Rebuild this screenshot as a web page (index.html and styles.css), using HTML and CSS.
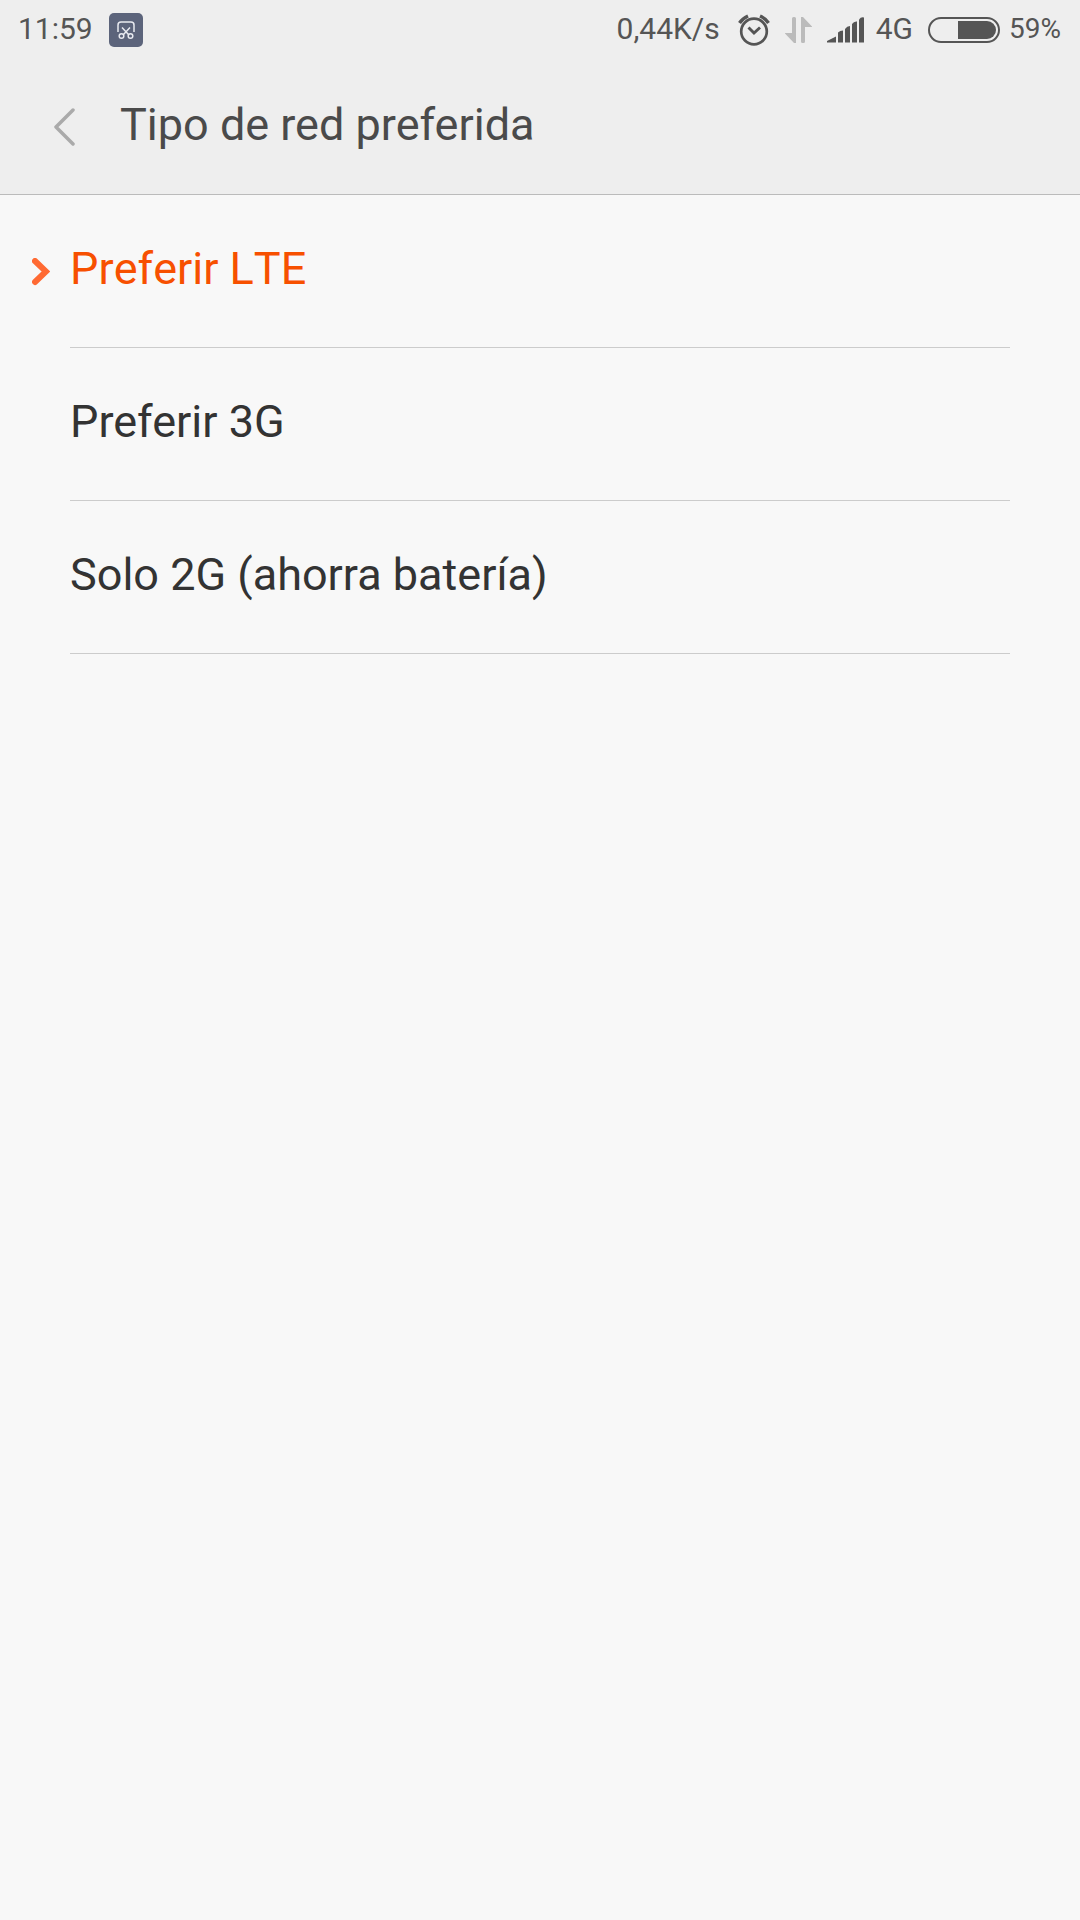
FILE: index.html
```
<!DOCTYPE html>
<html lang="es">
<head>
  <meta charset="UTF-8" />
  <meta name="viewport" content="width=device-width, initial-scale=1.0" />
  <title>Tipo de red preferida</title>
  <link rel="stylesheet" href="styles.css">
</head>
<body>

  <header>
    <div class="status-bar">
      <span>11:59</span>
      <svg class="app-icon" width="34" height="34" viewBox="0 0 34 34" aria-hidden="true">
        <rect width="34" height="34" rx="5" fill="#5c647b" />
        <g fill="none" stroke="#e8eaf0" stroke-width="1.5">
          <path d="M9 19v-7q0-3 3-3h10q3 0 3 3v7" />
          <path d="M13 14.500l6.500 7M21 14.500l-6.500 7" />
          <circle cx="12.500" cy="23" r="2.300" />
          <circle cx="21.500" cy="23" r="2.300" />
        </g>
      </svg>

      <span class="speed">0,44K/s</span>
      <svg class="alarm" width="32" height="32" viewBox="0 0 32 32" fill="none" stroke="#555" aria-hidden="true">
        <circle cx="16" cy="17.500" r="12.800" stroke-width="2.700" />
        <path d="M10.500 13.500l5.500 5.500 6-5.500" stroke-width="2.900" />
        <path d="M1.500 9Q4.500 4.500 10 2M30.500 9Q27.500 4.500 22 2" stroke-width="3.400" />
      </svg>
      <svg class="data" width="28" height="26" viewBox="0 0 28 26" fill="#bbb" aria-hidden="true">
        <path d="M7 1.500Q7 0 8.500 0h1Q11 0 11 1.500V26H9L0 16.500V16h7z" />
        <path d="M20 24.500Q20 26 18.500 26h-1Q16 26 16 24.500V0h2l9 9.500v.500h-7z" />
      </svg>
      <svg class="signal" width="38" height="26" viewBox="0 0 38 26" fill="#555" aria-hidden="true">
        <path d="M0 25.500v-1.500l9-4.500v6z" />
        <path d="M11 15.500q2-2 5-2v12h-5z" />
        <path d="M18 12q2-3 5-3v16.500h-5z" />
        <path d="M25 7q2-3 5-2.500v21h-5z" />
        <path d="M32 2.500q2-3 5-2v25h-5z" />
      </svg>
      <span class="network">4G</span>
      <svg class="battery" width="72" height="26" viewBox="0 0 72 26" aria-hidden="true">
        <rect x="1" y="1" width="70" height="24" rx="12" fill="none" stroke="#555" stroke-width="2" />
        <path d="M30 4h29a9 9 0 0 1 0 18H30z" fill="#555" />
      </svg>
      <span class="percent">59%</span>
    </div>

    <div class="title-bar">
      <button class="back-btn" type="button" aria-label="Atrás" onclick="history.back()">
        <svg width="22" height="40" viewBox="0 0 22 40" fill="none" stroke="#aaa" stroke-width="3.5" stroke-linecap="round" stroke-linejoin="round">
          <path d="M19 3L2 20l17 17" />
        </svg>
      </button>
      <h1 id="title">Tipo de red preferida</h1>
    </div>
  </header>

  <main role="radiogroup" aria-labelledby="title">
    <label class="option">
      <input type="radio" name="network" value="lte" checked />
      <svg width="18" height="28" viewBox="0 0 18 28"><path d="M3 3l11 10.500L3 24" /></svg>
      <span>Preferir LTE</span>
    </label>
    <label class="option">
      <input type="radio" name="network" value="3g" />
      <svg width="18" height="28" viewBox="0 0 18 28"><path d="M3 3l11 10.500L3 24" /></svg>
      <span>Preferir 3G</span>
    </label>
    <label class="option">
      <input type="radio" name="network" value="2g" />
      <svg width="18" height="28" viewBox="0 0 18 28"><path d="M3 3l11 10.500L3 24" /></svg>
      <span>Solo 2G (ahorra batería)</span>
    </label>
  </main>

</body>
</html>
```
FILE: styles.css
```
body {
  font-family: Roboto, sans-serif;
  background-color: #f8f8f8;
  color: #333;
  margin: 0;
}
header {
  background-color: #eee;
  border-bottom: 1px solid #bbb;
}
.status-bar {
  display: flex;
  align-items: center;
  padding: 2px 19px 0 18px;
  font-size: 30px;
  line-height: 54px;
  color: #555;
}
.status-bar svg {
  flex: none;
  margin-top: 2px;
}
.app-icon {
  margin-left: 16px;
}
.speed {
  margin-left: auto;
}
.alarm {
  margin-left: 18px;
}
.data {
  margin-left: 15px;
}
.signal {
  margin-left: 14px;
}
.network {
  margin-left: 11px;
}
.battery {
  margin-left: 15px;
}
.percent {
  margin-left: 9px;
  font-size: 28px;
}
.title-bar {
  display: flex;
  align-items: center;
  padding: 41px 54px;
}
.back-btn {
  display: flex;
  margin: 4px 0 0;
  padding: 0;
  border: none;
  background: none;
  cursor: pointer;
}
h1 {
  margin: 0 0 0 44px;
  font-size: 45px;
  font-weight: normal;
  line-height: 56px;
  color: #4a4a4a;
}
.option {
  display: grid;
  grid-template-columns: 70px 1fr;
  align-items: center;
  margin-right: 70px;
  cursor: pointer;
}
/* radio and its arrow share the left column */
.option input,
.option svg {
  grid-area: 1 / 1;
  margin: 0 0 0 32px;
}
.option input {
  appearance: none;
  width: 18px;
  height: 28px;
}
.option svg {
  visibility: hidden;
  fill: none;
  stroke: #ff6a33;
  stroke-width: 6;
  stroke-linecap: round;
}
.option span {
  grid-area: 1 / 2;
  padding: 46px 0 50px;
  border-bottom: 1px solid #ccc;
  font-size: 45px;
  line-height: 56px;
}
.option input:checked ~ svg {
  visibility: visible;
}
.option input:checked ~ span {
  color: #f75000;
  font-kerning: none;
}
```
